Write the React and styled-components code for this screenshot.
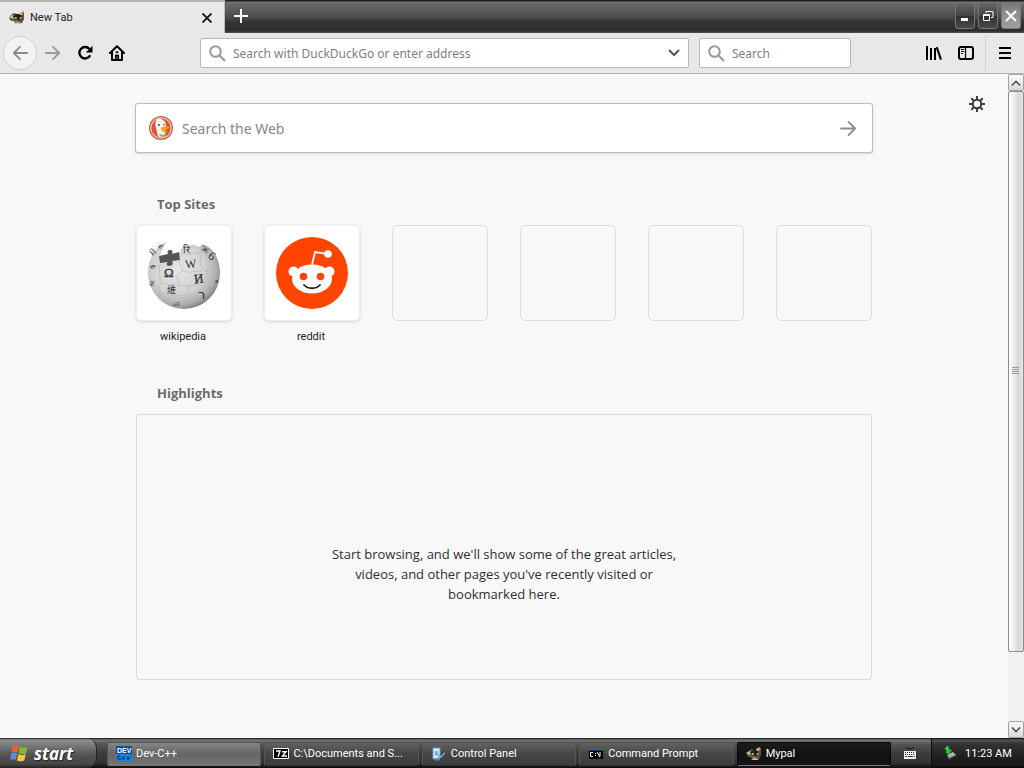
import React from "react";
import styled, { createGlobalStyle, css } from "styled-components";

const GlobalStyle = createGlobalStyle`
  * {
    box-sizing: border-box;
  }

  body {
    margin: 0;
    font-family: Roboto, "Noto Sans", sans-serif;
    font-size: 11px;
    color: #222;
  }

  button {
    font-family: inherit;
    padding: 0;
    border: 0;
    background: transparent;
    cursor: pointer;
  }

  svg {
    display: block;
    flex: none;
  }
`;

const Desktop = styled.div`
  min-height: 100vh;
  display: flex;
  flex-direction: column;
  background: #f8f8f8;
`;

/* title bar */

const TitleBar = styled.header`
  height: 33px;
  display: flex;
  background: linear-gradient(#1c1c1c 0, #1c1c1c 1px, #777 2px, #686868 4px, #4c4c4c 17px, #343434 22px, #2e2e2e 31px, #555 33px);
`;

const Tab = styled.div`
  width: 225px;
  display: flex;
  align-items: center;
  padding: 0 9px 0 9px;
  gap: 5px;
  background: #e8e8e8;
  border-top: 2px solid #b5b5b1;
  border-right: 1px solid #bbb;
`;

const TabTitle = styled.span`
  flex: 1;
  line-height: 16px;
  color: #222;
`;

const PlainButton = styled.button`
  display: flex;
  align-items: center;
  justify-content: center;
  width: ${(p) => p.$size || 16}px;
  height: ${(p) => p.$size || 16}px;
`;

const NewTabButton = styled(PlainButton)`
  width: 32px;
  height: 32px;
`;

const WindowControls = styled.div`
  margin-left: auto;
  display: flex;
  align-items: flex-start;
  gap: 3px;
  padding: 2px 3px 0 0;
`;

const ControlButton = styled.button`
  width: 20px;
  height: 27px;
  display: flex;
  align-items: center;
  justify-content: center;
  border: 1px solid #777;
  border-radius: 3px;
  background: ${(p) =>
    p.$light
      ? "linear-gradient(#777, #929292 50%, #a0a0a0)"
      : "linear-gradient(#666, #444 50%, #303030 52%, #4a4a4a)"};
`;

/* navigation toolbar */

const Toolbar = styled.nav`
  height: 41px;
  display: flex;
  align-items: center;
  padding: 0 3px;
  background: #e8e8e8;
  border-bottom: 1px solid #b4b4b4;
`;

const BackButton = styled(PlainButton)`
  width: 34px;
  height: 34px;
  border: 1px solid #cfcfcf;
  border-radius: 50%;
  background: #f2f3f2;
`;

const NavButton = styled(PlainButton)`
  width: 32px;
  height: 32px;
`;

const Field = styled.label`
  height: 30px;
  display: flex;
  align-items: center;
  gap: 7px;
  padding: 0 6px 0 8px;
  background: #fff;
  border: 1px solid #b8b8b8;
  border-radius: 2px;
`;

const AddressField = styled(Field)`
  flex: 1;
  margin-left: 67px;
  margin-right: 10px;
`;

const SearchField = styled(Field)`
  width: 152px;
  margin-right: 67px;
`;

const Input = styled.input`
  flex: 1;
  min-width: 0;
  padding: 0;
  border: 0;
  outline: 0;
  background: transparent;
  font-family: "Noto Sans", "Open Sans", sans-serif;
  font-size: ${(p) => (p.$large ? 14 : 12)}px;
  color: #333;

  &::placeholder {
    color: ${(p) => (p.$large ? "#868686" : "#808080")};
    opacity: 1;
  }
`;

const MenuArea = styled.div`
  height: 36px;
  display: flex;
  align-items: center;
  margin-left: 3px;
  padding-left: 3px;
  border-left: 1px solid #d3d3d3;
`;

/* new tab page */

const Viewport = styled.div`
  flex: 1;
  display: flex;
`;

const Page = styled.main`
  flex: 1;
  position: relative;
  padding: 29px 32px 57px;
`;

const SettingsButton = styled(PlainButton)`
  position: absolute;
  top: 20px;
  right: 21px;
`;

const Column = styled.div`
  max-width: 736px;
  margin: 0 auto;
`;

const WebSearch = styled.label`
  height: 50px;
  display: flex;
  align-items: center;
  gap: 9px;
  margin: 0 -1px 40px;
  padding: 0 15px 0 13px;
  background: #fff;
  border: 1px solid #bebebe;
  border-radius: 3px;
  box-shadow: 0 1px 3px rgba(0, 0, 0, 0.15);
`;

const SectionTitle = styled.h2`
  margin: 0;
  padding-left: 21px;
  font-family: "Open Sans", "Noto Sans", sans-serif;
  font-size: 13px;
  line-height: 22px;
  font-weight: 700;
  color: #6b6b6b;
`;

const Sites = styled.ul`
  display: grid;
  grid-template-columns: repeat(6, 96px);
  justify-content: space-between;
  margin: 10px 0 37px;
  padding: 0;
  list-style: none;
`;

const Site = styled.li`
  text-align: center;
`;

const SiteLink = styled.a`
  display: block;
  color: #222;
  text-decoration: none;
`;

const Tile = styled.div`
  height: 96px;
  display: flex;
  align-items: center;
  justify-content: center;
  border-radius: 5px;
  border: 1px solid #dedede;

  ${(p) =>
    p.$filled &&
    css`
      background: #fff;
      border-color: #eee;
      box-shadow: 0 1px 3px rgba(0, 0, 0, 0.14);
    `}
`;

const SiteName = styled.div`
  padding: 8px 2px 0 0;
  line-height: 16px;
`;

const Highlights = styled.div`
  min-height: 266px;
  margin-top: 10px;
  padding: 54px 0 0;
  display: flex;
  align-items: center;
  justify-content: center;
  border: 1px solid #dadada;
  border-radius: 3px;
`;

const EmptyMessage = styled.p`
  max-width: 350px;
  margin: 0;
  font-family: "Open Sans", "Noto Sans", sans-serif;
  font-size: 13px;
  line-height: 20px;
  text-align: center;
  color: #2f2f2f;
`;

const ScrollBar = styled.div`
  width: 16px;
  display: flex;
  flex-direction: column;
  background: #f1f1f1;
`;

const ScrollButton = styled.button`
  height: 17px;
  display: flex;
  align-items: center;
  justify-content: center;
  background: linear-gradient(#fdfdfd, #d8d8d8);
  border: 1px solid #a2a2a2;
  border-radius: 2px;
`;

const Track = styled.div`
  flex: 1;
  display: flex;
  flex-direction: column;
`;

const Thumb = styled.div`
  flex: 0 0 89%;
  display: flex;
  align-items: center;
  justify-content: center;
  border: 1px solid #8c8c8c;
  border-radius: 2px;
  background: linear-gradient(90deg, #fff, #efefef 35%, #d8d8d8 65%, #e6e6e6);
`;

/* taskbar */

const Taskbar = styled.footer`
  height: 30px;
  display: flex;
  align-items: stretch;
  color: #fff;
  background: linear-gradient(#111 0, #777 2px, #555 6px, #3b3b3b 16px, #333 25px, #111 29px);
`;

const StartButton = styled.button`
  width: 97px;
  display: flex;
  align-items: center;
  gap: 6px;
  padding-left: 10px;
  font-size: 17px;
  font-family: "Open Sans", sans-serif;
  font-style: italic;
  font-weight: 700;
  color: #fff;
  text-shadow: 1px 1px 1px #222;
  border-radius: 0 10px 10px 0;
  border-right: 1px solid #222;
  background: linear-gradient(#222 0, #909090 2px, #777 8px, #505050 18px, #464646 26px, #222);
`;

const Tasks = styled.div`
  flex: 1;
  display: flex;
  gap: 3px;
  padding: 4px 0 2px 10px;
`;

const Task = styled.button`
  flex: 1 1 0;
  min-width: 0;
  display: flex;
  align-items: center;
  gap: 4px;
  padding-left: 8px;
  font-size: 11px;
  line-height: 16px;
  color: #fff;
  white-space: nowrap;
  border: 1px solid ${(p) => (p.$look === "active" ? "#080808" : "#555")};
  border-radius: 2px;
  background: ${(p) =>
    p.$look === "active"
      ? "linear-gradient(#1c1c1c, #111 50%, #161616)"
      : p.$look === "hot"
        ? "linear-gradient(#858585, #666 50%, #757575)"
        : "linear-gradient(#626262, #454545 50%, #3c3c3c)"};
  border-bottom-color: ${(p) => (p.$look ? "#777" : "#333")};
`;

const LanguageBar = styled.div`
  width: 40px;
  display: flex;
  align-items: center;
  padding-left: 12px;
`;

const Tray = styled.div`
  width: 93px;
  display: flex;
  align-items: center;
  gap: 7px;
  padding: 0 0 0 10px;
  border-left: 1px solid #0c0c0c;
  background: linear-gradient(#080808 0, #555 2px, #333 6px, #202020 18px, #191919 27px, #080808);
`;

/* drawings */

const MypalIcon = () => (
  <svg width="16" height="16" viewBox="0 0 16 16" aria-hidden="true">
    <path d="M2 5 5 3l3 1 3 0 3-3 1 2v6l-2 4-4 1-3-1-1-2-3 0-2-3z" fill="#5a5140" />
    <path d="m0 7 4-2 3 2-3 2zM10 3l4-2-1 4-2 0zM5 13l4-1 4 1-2 1H7z" fill="#cfc294" />
    <path d="m4 6 4-2 4 1 1 4-3 1-5-1z" fill="#221d18" />
    <path d="m5 8 2-1 1 1-1 1zM10 8l3-1-1 2z" fill="#f5e6bc" />
    <path d="m2 9 4 2 4-1-2 2-3-1z" fill="#a58f4c" />
    <path d="m12 4 3-2-1 3z" fill="#c46b37" />
  </svg>
);

const Lens = () => (
  <svg width="17" height="17" viewBox="0 0 17 17" fill="none" stroke="#999" aria-hidden="true">
    <circle cx="6.5" cy="6.5" r="5.3" strokeWidth="2" />
    <path d="m10.5 10.5 5.5 5.5" strokeWidth="2.2" />
  </svg>
);

const Arrow = ({ color, flip, size = 18, weight = 2 }) => (
  <svg width={size} height={size} viewBox="0 0 18 18" fill="none" stroke={color} strokeWidth={weight} strokeLinecap="round" strokeLinejoin="round">
    <path d={flip ? "M17 9H2m7-7L2 9l7 7" : "M1 9h15M9 2l7 7-7 7"} />
  </svg>
);

const Reload = () => (
  <svg width="16" height="16" viewBox="0 0 16 16" fill="none" stroke="#000" strokeWidth="2.4">
    <path d="M13.2 10.2A5.7 5.7 0 1 1 12.4 4" />
    <path d="M15.5.8v6.7H8.8z" fill="#000" stroke="none" />
  </svg>
);

const Home = () => (
  <svg width="16" height="16" viewBox="0 0 16 16" fill="none" stroke="#000" strokeWidth="2" strokeLinejoin="round" strokeLinecap="round">
    <path d="m1 8 7-6.7L15 8" />
    <path d="M3 7.5V15h10V7.5" />
    <path d="M6.8 15v-4.5h2.4V15M7.5 7.2h1" strokeWidth="1.8" />
  </svg>
);

const Library = () => (
  <svg width="16" height="16" viewBox="0 0 16 16" fill="none" stroke="#000" strokeWidth="2">
    <path d="M1 1v14M5 3v12M9 3v12M10.7 2.2l4.3 12.4" />
  </svg>
);

const Sidebar = () => (
  <svg width="16" height="16" viewBox="0 0 16 16" fill="none" stroke="#000" strokeWidth="2">
    <rect x="1" y="2" width="14" height="12" rx="2" />
    <path d="M7.5 2v12" strokeWidth="1.3" />
    <path d="M3 4.5h3M3 6.5h3M3 8.5h2" strokeWidth="1" />
  </svg>
);

const Chevron = ({ up, size = 12, color = "#555" }) => (
  <svg width={size} height={size} viewBox="0 0 12 12" fill="none" stroke={color} strokeWidth="2">
    <path d={up ? "m1 9 5-5 5 5" : "m1 3 5 5 5-5"} />
  </svg>
);

const Gear = () => (
  <svg width="16" height="16" viewBox="0 0 16 16" fill="none" stroke="#3c3c3c">
    <circle cx="8" cy="8" r="4.2" strokeWidth="2" />
    <path
      d="M8 0v4M8 12v4M0 8h4M12 8h4M2.3 2.3l2.8 2.8M10.9 10.9l2.8 2.8M13.7 2.3l-2.8 2.8M5.1 10.9l-2.8 2.8"
      strokeWidth="2"
    />
  </svg>
);

const Duck = () => (
  <svg width="24" height="24" viewBox="0 0 24 24" aria-hidden="true">
    <circle cx="12" cy="12" r="12" fill="#d9533a" />
    <circle cx="12" cy="12" r="10.2" fill="#dc5139" stroke="#f7d3c9" strokeWidth="1.1" />
    <path d="M7 5c1-3 5-3 7-1 2 1 3 3 3 6l-1 4 1 6c-3 1.6-6 1.5-8 .4L7 12C6 9 6 7 7 5z" fill="#f5f3ed" />
    <path d="M12 12c2-2 6-2 8-1 0 2-3 3-5 3 2 1 3 1 3 2-2 1-6 0-6-4z" fill="#f6a51f" />
    <path d="m10 18 4 1 3-2v3l-3 1-3-1z" fill="#8fb052" />
    <circle cx="10" cy="9" r="1" fill="#35516c" />
    <circle cx="15" cy="8.5" r=".8" fill="#35516c" />
  </svg>
);

const Wikipedia = () => (
  <svg width="74" height="74" viewBox="0 0 74 74" aria-hidden="true">
    <defs>
      <radialGradient id="globe" cx="42%" cy="40%" r="62%">
        <stop offset="0" stopColor="#e6e6e6" />
        <stop offset=".6" stopColor="#d2d2d2" />
        <stop offset=".86" stopColor="#adadad" />
        <stop offset="1" stopColor="#808080" />
      </radialGradient>
    </defs>
    <path
      d="M19 6c-2 3-1 5-4 8l-3 8 10-4 11-1c-1-4 2-6 6-6 4 0 4-3 8-2l5 2 4-3 4 2c8 5 13 15 13 27a36 36 0 0 1-72 0C1 23 8 11 19 6z"
      fill="url(#globe)"
    />
    <path d="m12 20 9-2c-1-3 0-4 2-4 3 0 3 2 2 4l7-2 1 8-8 1c2 3 0 5-3 5-3 0-3-3-1-4l-8 1z" fill="#555" />
    <g fill="none" stroke="#b2b2b2" strokeWidth=".6">
      <path d="M3 30c5-2 6 1 9 0M13 28c-2 8 1 13 0 20 4 1 5-2 8 0s7-1 9 0M32 25c0 5 4 5 3 9s-5 3-5 7 3 5 2 9" />
      <path d="M34 18c5-2 6 2 10 0s7 0 10-2M34 35c5-2 6 3 10 1s8 1 11-1M53 18c2 5-1 8 1 12s7 3 6 8-4 5-3 10" />
      <path d="M31 50c5-2 7 2 11 0s8 1 12-2M41 50c-1 5 3 7 1 12M58 35c5 1 8-3 13-1M10 48c3 4 1 8 4 12M24 59c5 2 8-1 14 1" />
    </g>
    <g fill="#333" fontFamily="Liberation Serif, serif" fontSize="13">
      <text x="17" y="41" stroke="#333" strokeWidth=".3">Ω</text>
      <text x="38" y="32" fontSize="12" transform="rotate(-6 44 28)">W</text>
      <text x="47" y="47" transform="rotate(-6 52 43)" stroke="#333" strokeWidth=".3">И</text>
      <text x="20" y="57" fontFamily="Noto Sans CJK TC, sans-serif" fontSize="9">維</text>
      <text x="51" y="63" fontSize="13" fontFamily="DejaVu Sans, sans-serif">ר</text>
      <text x="62" y="24" fontSize="12" transform="rotate(35 65 20)">6</text>
      <text x="36" y="17" fontSize="10">रि</text>
      <text x="5" y="20" fontSize="8" transform="rotate(-35 5 20)">Й</text>
      <text x="13" y="13" fontSize="7" transform="rotate(-50 13 13)">њ</text>
      <text x="3" y="36" fontSize="8" transform="rotate(-10 5 34)">ᄒ</text>
      <text x="3" y="50" fontSize="9" transform="rotate(15 5 47)">ತ</text>
      <text x="54" y="14" fontSize="10" transform="rotate(30 54 14)">ж</text>
      <text x="26" y="70" fontSize="6">வி</text>
      <text x="68" y="47" fontSize="7">я</text>
    </g>
  </svg>
);

const Reddit = () => (
  <svg width="72" height="72" viewBox="0 0 72 72" aria-hidden="true">
    <circle cx="36" cy="36" r="36" fill="#ff4500" />
    <path d="m36 28 3-13 13 2" fill="none" stroke="#fff" strokeWidth="1.8" />
    <circle cx="52" cy="17" r="3.8" fill="#fff" />
    <circle cx="17.5" cy="34.5" r="5" fill="#fff" />
    <circle cx="53.5" cy="34.5" r="5" fill="#fff" />
    <ellipse cx="36" cy="42" rx="20" ry="14.5" fill="#fff" />
    <circle cx="27.5" cy="39.5" r="3.8" fill="#ff4500" />
    <circle cx="44.5" cy="39.5" r="3.8" fill="#ff4500" />
    <path d="M28 48c4 4.3 12 4.3 16 0" fill="none" stroke="#222" strokeWidth="1.8" strokeLinecap="round" />
  </svg>
);

const WindowsFlag = () => (
  <svg width="18" height="18" viewBox="0 0 18 18" aria-hidden="true">
    <path d="M3 2c2-1.5 4-1.2 6 0L7.5 8.5c-2-1-4-1.2-6 0z" fill="#e8632c" />
    <path d="M10 2.6c2 1.2 5 1.5 7.5.1L16 9.2c-2.3 1.3-5 1-7.3-.1z" fill="#82b93c" />
    <path d="M1.2 9.5c2-1.4 4-1.2 6 0L5.7 16c-2-1-4-1.2-5.7 0z" fill="#5b8cdd" />
    <path d="M8.4 10c2 1.2 5 1.4 7.4.1l-1.5 6.5c-2.2 1.2-5 .9-7.3-.2z" fill="#f4c93a" />
  </svg>
);

const DevIcon = () => (
  <svg width="16" height="16" viewBox="0 0 16 16" aria-hidden="true">
    <path d="M0 0h16v16H0z" fill="#174a9c" />
    <path d="M0 8h16v8H0z" fill="#1680d4" />
    <text x="1" y="7" fontSize="7" fontWeight="700" fontFamily="Liberation Sans, sans-serif" fill="#fff">DEV</text>
    <path d="M4 10H2v3h3M7 11v3M6 12h3M12 11v3M11 12h3" stroke="#0c3374" fill="none" />
  </svg>
);

const SevenZipIcon = () => (
  <svg width="16" height="16" viewBox="0 0 16 16" aria-hidden="true">
    <path d="M.5 2.5h15v10H.5z" fill="#000" stroke="#fff" />
    <path d="M3 5h4L5 10.8M9 5.8h4L9.5 10H14" fill="none" stroke="#fff" strokeWidth="1.4" />
  </svg>
);

const PanelIcon = () => (
  <svg width="16" height="16" viewBox="0 0 16 16" aria-hidden="true">
    <path d="m2 2 7 0v10l-7 1z" fill="#dceaf9" stroke="#6b9bd0" />
    <path d="m4 5 3 0v4L4 10z" fill="#6fa9e4" />
    <path d="m7 8 3 2 4-4 0 2-4 4-3-1z" fill="#63b5cb" />
    <path d="m3 13 6-1v2l-4 1z" fill="#5b8a9f" />
  </svg>
);

const ConsoleIcon = () => (
  <svg width="16" height="16" viewBox="0 0 16 16" aria-hidden="true">
    <path d="M1 3h14v10H1z" fill="#050505" />
    <path d="M1 3h14v1.5H1z" fill="#315eb2" />
    <path d="M5 6.5H2.5v4H5M7.5 7v1M7.5 9v1M9 6l3 5M12 6v4" fill="none" stroke="#fff" />
  </svg>
);

const KeyboardIcon = () => (
  <svg width="14" height="14" viewBox="0 0 14 14" aria-label="Keyboard">
    <path d="M3 2h2l1 1h2l1-1h2" fill="none" stroke="#111" />
    <path d="M1 5h12v8H1z" fill="#eee" />
    <path d="M2 6.5h10M2 8.5h10" stroke="#333" strokeDasharray="1 1" />
    <path d="M2 10.5h2M5 10.5h5M11 10.5h1" stroke="#333" />
  </svg>
);

const RemoveHardwareIcon = () => (
  <svg width="16" height="16" viewBox="0 0 16 16" aria-label="Safely remove hardware">
    <path d="m5 10 6-3 3 3-7 4z" fill="#adb4b8" />
    <path d="m6 11 2 2 6-3" fill="none" stroke="#5b666b" />
    <path d="m2 3 2 0 0-2 3 0 0 3 3 1-3 5-4-3 2-1z" fill="#26b83a" />
    <path d="m4 3 2 3" stroke="#7be477" />
  </svg>
);

const sites = [
  { name: "wikipedia", href: "#wikipedia", icon: <Wikipedia /> },
  { name: "reddit", href: "#reddit", icon: <Reddit /> },
  {},
  {},
  {},
  {},
];

const tasks = [
  { title: "Dev-C++", icon: <DevIcon />, look: "hot" },
  { title: "C:\\Documents and S...", icon: <SevenZipIcon /> },
  { title: "Control Panel", icon: <PanelIcon /> },
  { title: "Command Prompt", icon: <ConsoleIcon /> },
  { title: "Mypal", icon: <MypalIcon />, look: "active" },
];

const App = () => {
  return (
    <Desktop>
      <GlobalStyle />
      <TitleBar>
        <Tab>
          <MypalIcon />
          <TabTitle>New Tab</TabTitle>
          <PlainButton aria-label="Close tab">
            <svg width="10" height="10" viewBox="0 0 10 10" stroke="#111" strokeWidth="1.8">
              <path d="m.5.5 9 9M9.5.5l-9 9" />
            </svg>
          </PlainButton>
        </Tab>
        <NewTabButton aria-label="New tab">
          <svg width="14" height="14" viewBox="0 0 14 14" stroke="#fff" strokeWidth="2">
            <path d="M7 0v14M0 7h14" />
          </svg>
        </NewTabButton>
        <WindowControls>
          <ControlButton aria-label="Minimize">
            <svg width="12" height="12" viewBox="0 0 12 12">
              <path d="M2 8h7v3H2z" fill="#fff" />
            </svg>
          </ControlButton>
          <ControlButton aria-label="Restore">
            <svg width="12" height="12" viewBox="0 0 12 12" fill="none" stroke="#fff">
              <path d="M4 3V1.5h7v6H9" />
              <path d="M1.5 4.5h6v6h-6zM1 5.5h7" />
            </svg>
          </ControlButton>
          <ControlButton $light aria-label="Close">
            <svg width="12" height="12" viewBox="0 0 12 12" stroke="#fff" strokeWidth="2">
              <path d="m1 1 10 10M11 1 1 11" />
            </svg>
          </ControlButton>
        </WindowControls>
      </TitleBar>

      <Toolbar>
        <BackButton aria-label="Back">
          <Arrow flip color="#8b8b8b" size={16} />
        </BackButton>
        <NavButton aria-label="Forward">
          <Arrow color="#999" size={16} />
        </NavButton>
        <NavButton aria-label="Reload">
          <Reload />
        </NavButton>
        <NavButton aria-label="Home">
          <Home />
        </NavButton>
        <AddressField>
          <Lens />
          <Input aria-label="Address" placeholder="Search with DuckDuckGo or enter address" />
          <PlainButton aria-label="Show history">
            <Chevron />
          </PlainButton>
        </AddressField>
        <SearchField>
          <Lens />
          <Input aria-label="Search" placeholder="Search" />
        </SearchField>
        <NavButton aria-label="Library">
          <Library />
        </NavButton>
        <NavButton aria-label="Sidebars">
          <Sidebar />
        </NavButton>
        <MenuArea>
          <NavButton aria-label="Open menu">
            <svg width="12" height="12" viewBox="0 0 12 12" stroke="#000" strokeWidth="2">
              <path d="M0 1h12M0 6h12M0 11h12" />
            </svg>
          </NavButton>
        </MenuArea>
      </Toolbar>

      <Viewport>
        <Page>
          <SettingsButton $size={20} aria-label="Customize page">
            <Gear />
          </SettingsButton>
          <Column>
            <WebSearch>
              <Duck />
              <Input $large aria-label="Search the Web" placeholder="Search the Web" />
              <PlainButton $size={18} aria-label="Submit search">
                <Arrow color="#8b8b8b" size={17} />
              </PlainButton>
            </WebSearch>

            <SectionTitle>Top Sites</SectionTitle>
            <Sites>
              {sites.map((site, i) => (
                <Site key={i}>
                  {site.name ? (
                    <SiteLink href={site.href}>
                      <Tile $filled>{site.icon}</Tile>
                      <SiteName>{site.name}</SiteName>
                    </SiteLink>
                  ) : (
                    <Tile />
                  )}
                </Site>
              ))}
            </Sites>

            <SectionTitle>Highlights</SectionTitle>
            <Highlights>
              <EmptyMessage>
                Start browsing, and we'll show some of the great articles, videos, and other pages you've recently
                visited or bookmarked here.
              </EmptyMessage>
            </Highlights>
          </Column>
        </Page>
        <ScrollBar>
          <ScrollButton aria-label="Scroll up">
            <Chevron up size={10} />
          </ScrollButton>
          <Track>
            <Thumb>
              <svg width="8" height="8" viewBox="0 0 8 8" stroke="#999">
                <path d="M0 .5h7M0 2.5h7M0 4.5h7M0 6.5h7" />
              </svg>
            </Thumb>
          </Track>
          <ScrollButton aria-label="Scroll down">
            <Chevron size={10} />
          </ScrollButton>
        </ScrollBar>
      </Viewport>

      <Taskbar>
        <StartButton>
          <WindowsFlag />
          start
        </StartButton>
        <Tasks>
          {tasks.map((task) => (
            <Task key={task.title} $look={task.look}>
              {task.icon}
              {task.title}
            </Task>
          ))}
        </Tasks>
        <LanguageBar>
          <KeyboardIcon />
        </LanguageBar>
        <Tray>
          <RemoveHardwareIcon />
          <span>11:23 AM</span>
        </Tray>
      </Taskbar>
    </Desktop>
  );
};

export default App;
